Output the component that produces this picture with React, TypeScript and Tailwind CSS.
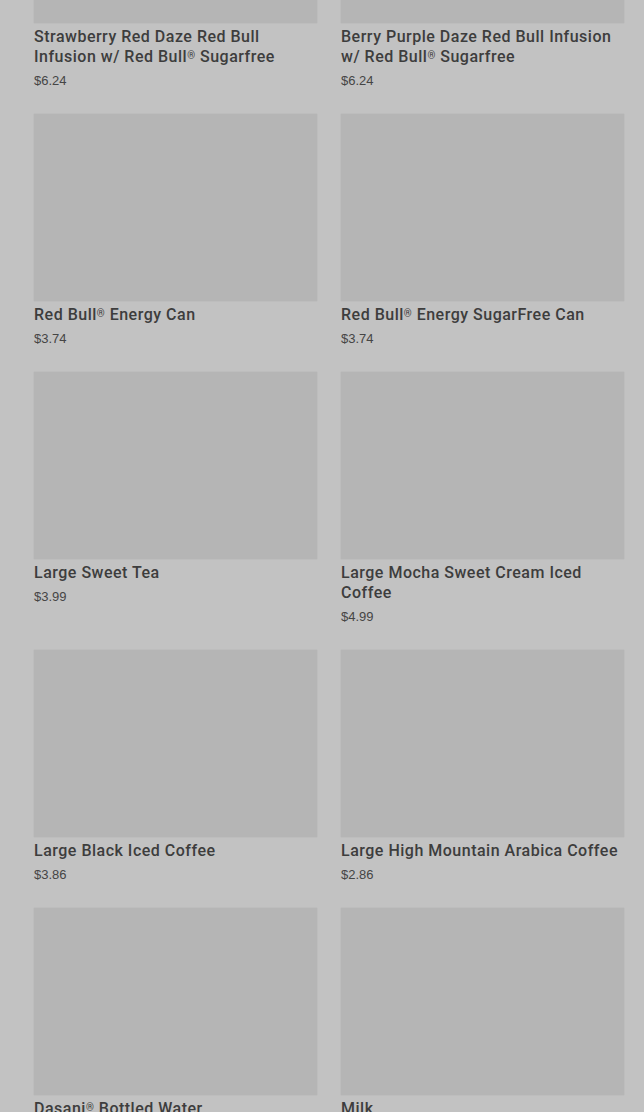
const items = [
  { name: 'Strawberry Red Daze Red Bull Infusion w/\u00a0Red Bull® Sugarfree', price: '$6.24' },
  { name: 'Berry Purple Daze Red Bull Infusion w/\u00a0Red Bull® Sugarfree', price: '$6.24' },
  { name: 'Red Bull® Energy Can', price: '$3.74' },
  { name: 'Red Bull® Energy SugarFree Can', price: '$3.74' },
  { name: 'Large Sweet Tea', price: '$3.99' },
  { name: 'Large Mocha Sweet Cream Iced Coffee', price: '$4.99' },
  { name: 'Large Black Iced Coffee', price: '$3.86' },
  { name: 'Large High Mountain Arabica Coffee', price: '$2.86' },
  { name: 'Dasani® Bottled Water', price: '$1.99' },
  { name: 'Milk', price: '$1.99' },
];

function Title({ text }: { text: string }) {
  const parts = text.split('®');
  return (
    <>
      {parts.map((p, i) => (
        <span key={i}>
          {p}
          {i < parts.length - 1 && (
            <span className="relative top-[-3px] text-[10px] leading-none">®</span>
          )}
        </span>
      ))}
    </>
  );
}

export default function App() {
  return (
    <div className="h-[1112px] overflow-hidden bg-[#c2c2c2]">
      <div className="mt-[-164px] grid grid-cols-2 gap-x-6 gap-y-[22px] pl-[34px] pr-[20px]">
        {items.map((item, i) => (
          <div key={i} className="flex flex-col">
            <div className="h-[187px] bg-[#b5b5b5] shadow-[0_0_1px_rgba(0,0,0,0.15)]" />
            <div className="mt-1 text-[16px] leading-5 font-medium text-[#3d3d3d] font-['Roboto',sans-serif] tracking-[0.5px]">
              <Title text={item.name} />
            </div>
            <div className="mt-[3px] text-[13px] leading-[22px] text-[#454545] font-['Liberation_Sans',Arial,sans-serif]">
              {item.price}
            </div>
          </div>
        ))}
      </div>
    </div>
  );
}
